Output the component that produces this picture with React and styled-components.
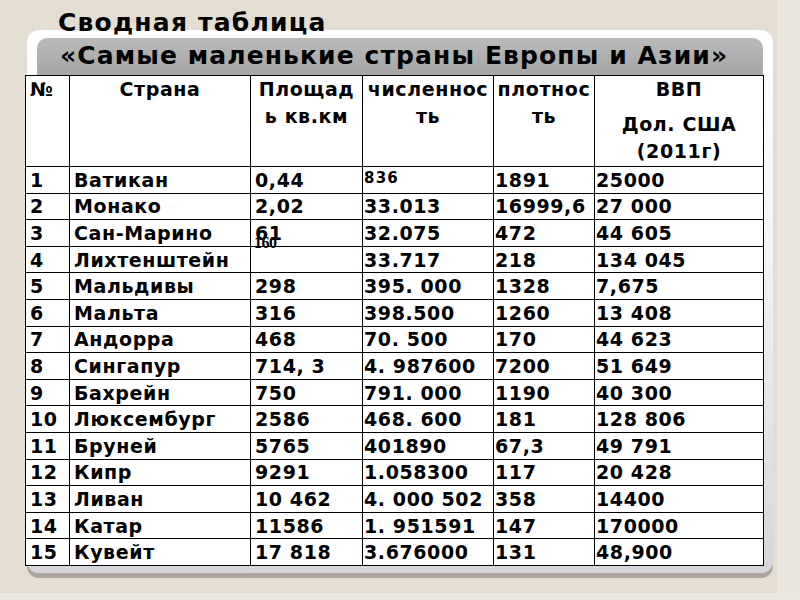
import React from 'react'
import styled, { createGlobalStyle } from 'styled-components'

const GlobalStyle = createGlobalStyle`
  html, body { margin: 0; padding: 0; }
  body { font-family: "DejaVu Sans", "Liberation Sans", sans-serif; }
`

const header = [
  { text: ['№'], align: 'left' },
  { text: ['Страна'] },
  { text: ['Площад', 'ь кв.км'] },
  { text: ['численнос', 'ть'] },
  { text: ['плотнос', 'ть'] },
]

const rows = [
  ['1', 'Ватикан', '0,44', '836', '1891', '25000'],
  ['2', 'Монако', '2,02', '33.013', '16999,6', '27 000'],
  ['3', 'Сан-Марино', '61', '32.075', '472', '44 605'],
  ['4', 'Лихтенштейн', '', '33.717', '218', '134 045'],
  ['5', 'Мальдивы', '298', '395. 000', '1328', '7,675'],
  ['6', 'Мальта', '316', '398.500', '1260', '13 408'],
  ['7', 'Андорра', '468', '70. 500', '170', '44 623'],
  ['8', 'Сингапур', '714, 3', '4. 987600', '7200', '51 649'],
  ['9', 'Бахрейн', '750', '791. 000', '1190', '40 300'],
  ['10', 'Люксембург', '2586', '468. 600', '181', '128 806'],
  ['11', 'Бруней', '5765', '401890', '67,3', '49 791'],
  ['12', 'Кипр', '9291', '1.058300', '117', '20 428'],
  ['13', 'Ливан', '10 462', '4. 000 502', '358', '14400'],
  ['14', 'Катар', '11586', '1. 951591', '147', '170000'],
  ['15', 'Кувейт', '17 818', '3.676000', '131', '48,900'],
]

const widths = [44, 181, 112, 131, 101, 169]

function App() {
  return (
    <Slide>
      <GlobalStyle />
      <Title>Сводная таблица</Title>
      <Panel>
        <Banner>«Самые маленькие страны Европы и Азии»</Banner>
        <Table>
          <colgroup>
            {widths.map((w, i) => <col key={i} style={{ width: w }} />)}
          </colgroup>
          <thead>
            <tr>
              {header.map((h, i) => (
                <HeadCell key={i} $align={h.align}>
                  {h.text.map((t, j) => <div key={j}>{t}</div>)}
                </HeadCell>
              ))}
              <HeadCell>
                <div>ВВП</div>
                <Unit>
                  <div>Дол. США</div>
                  <div>(2011г)</div>
                </Unit>
              </HeadCell>
            </tr>
          </thead>
          <tbody>
            {rows.map((r) => (
              <Row key={r[0]}>
                <Cell>{r[0]}</Cell>
                <Cell>{r[1]}</Cell>
                <Cell>
                  {r[0] === '3' ? (
                    <Stack>61<Stray>160</Stray></Stack>
                  ) : r[2]}
                </Cell>
                {r[3] === '836' ? (
                  <Cell $tight $small>{r[3]}</Cell>
                ) : (
                  <Cell $tight>{r[3]}</Cell>
                )}
                <Cell $tight>{r[4]}</Cell>
                <Cell $tight>{r[5]}</Cell>
              </Row>
            ))}
          </tbody>
        </Table>
      </Panel>
    </Slide>
  )
}

export default App

const Slide = styled.div`
  width: 800px;
  height: 600px;
  overflow: hidden;
  background:
    linear-gradient(to bottom, transparent 593px, #ebe6de 593px),
    linear-gradient(to right, #e4ddd2 777px, #ebe6dd 777px);
`

const Title = styled.div`
  padding: 8px 0 0 58px;
  height: 22px;
  line-height: 30px;
  font-size: 25px;
  font-weight: bold;
  letter-spacing: 1.2px;
  color: #000;
  white-space: nowrap;
`

const Panel = styled.div`
  margin-left: 27px;
  width: 726px;
  padding: 8px 10px 7px 10px;
  border-radius: 12px;
  background: linear-gradient(to bottom, #ffffff 0%, #f4f4f5 40%, #d6d6da 100%);
  box-shadow: 0 5px 0 #aaa69e;
`

const Banner = styled.div`
  height: 37px;
  padding-left: 23px;
  border-radius: 10px 10px 0 0;
  background: linear-gradient(to bottom, #bababa, #a5a5a5);
  font-size: 25px;
  font-weight: bold;
  letter-spacing: 1.1px;
  line-height: 36px;
  color: #000;
  white-space: nowrap;
`

const Table = styled.table`
  margin-left: -12px;
  width: 738px;
  border-collapse: collapse;
  table-layout: fixed;
  background: #fff;
  font-size: 19px;
  font-weight: bold;
  letter-spacing: 0.6px;
  color: #000;
`

const HeadCell = styled.th`
  height: 90px;
  padding: 0 0 0 ${(p) => (p.$align === 'left' ? '4px' : '0')};
  border: 1.5px solid #000;
  vertical-align: top;
  text-align: ${(p) => p.$align || 'center'};
  font-weight: bold;
  line-height: 27px;
  white-space: nowrap;
  overflow: hidden;
`

const Unit = styled.div`
  margin-top: 8px;
  line-height: 27px;
`

const Row = styled.tr`
  height: 26.6px;
`

const Cell = styled.td`
  padding: 0 0 0 ${(p) => (p.$tight ? '1px' : '4px')};
  border: 1.5px solid #000;
  white-space: nowrap;
  overflow: visible;
  line-height: 22px;
  vertical-align: ${(p) => (p.$small ? 'top' : 'middle')};
  font-size: ${(p) => (p.$small ? '15px' : '19px')};
  letter-spacing: ${(p) => (p.$small ? '1.2px' : '0.6px')};
`

const Stack = styled.span`
  position: relative;
  display: inline-block;
`

const Stray = styled.span`
  position: absolute;
  left: -1px;
  top: 13px;
  font-family: "Liberation Serif", serif;
  font-size: 16px;
  font-weight: bold;
  letter-spacing: -0.5px;
  line-height: 16px;
`
